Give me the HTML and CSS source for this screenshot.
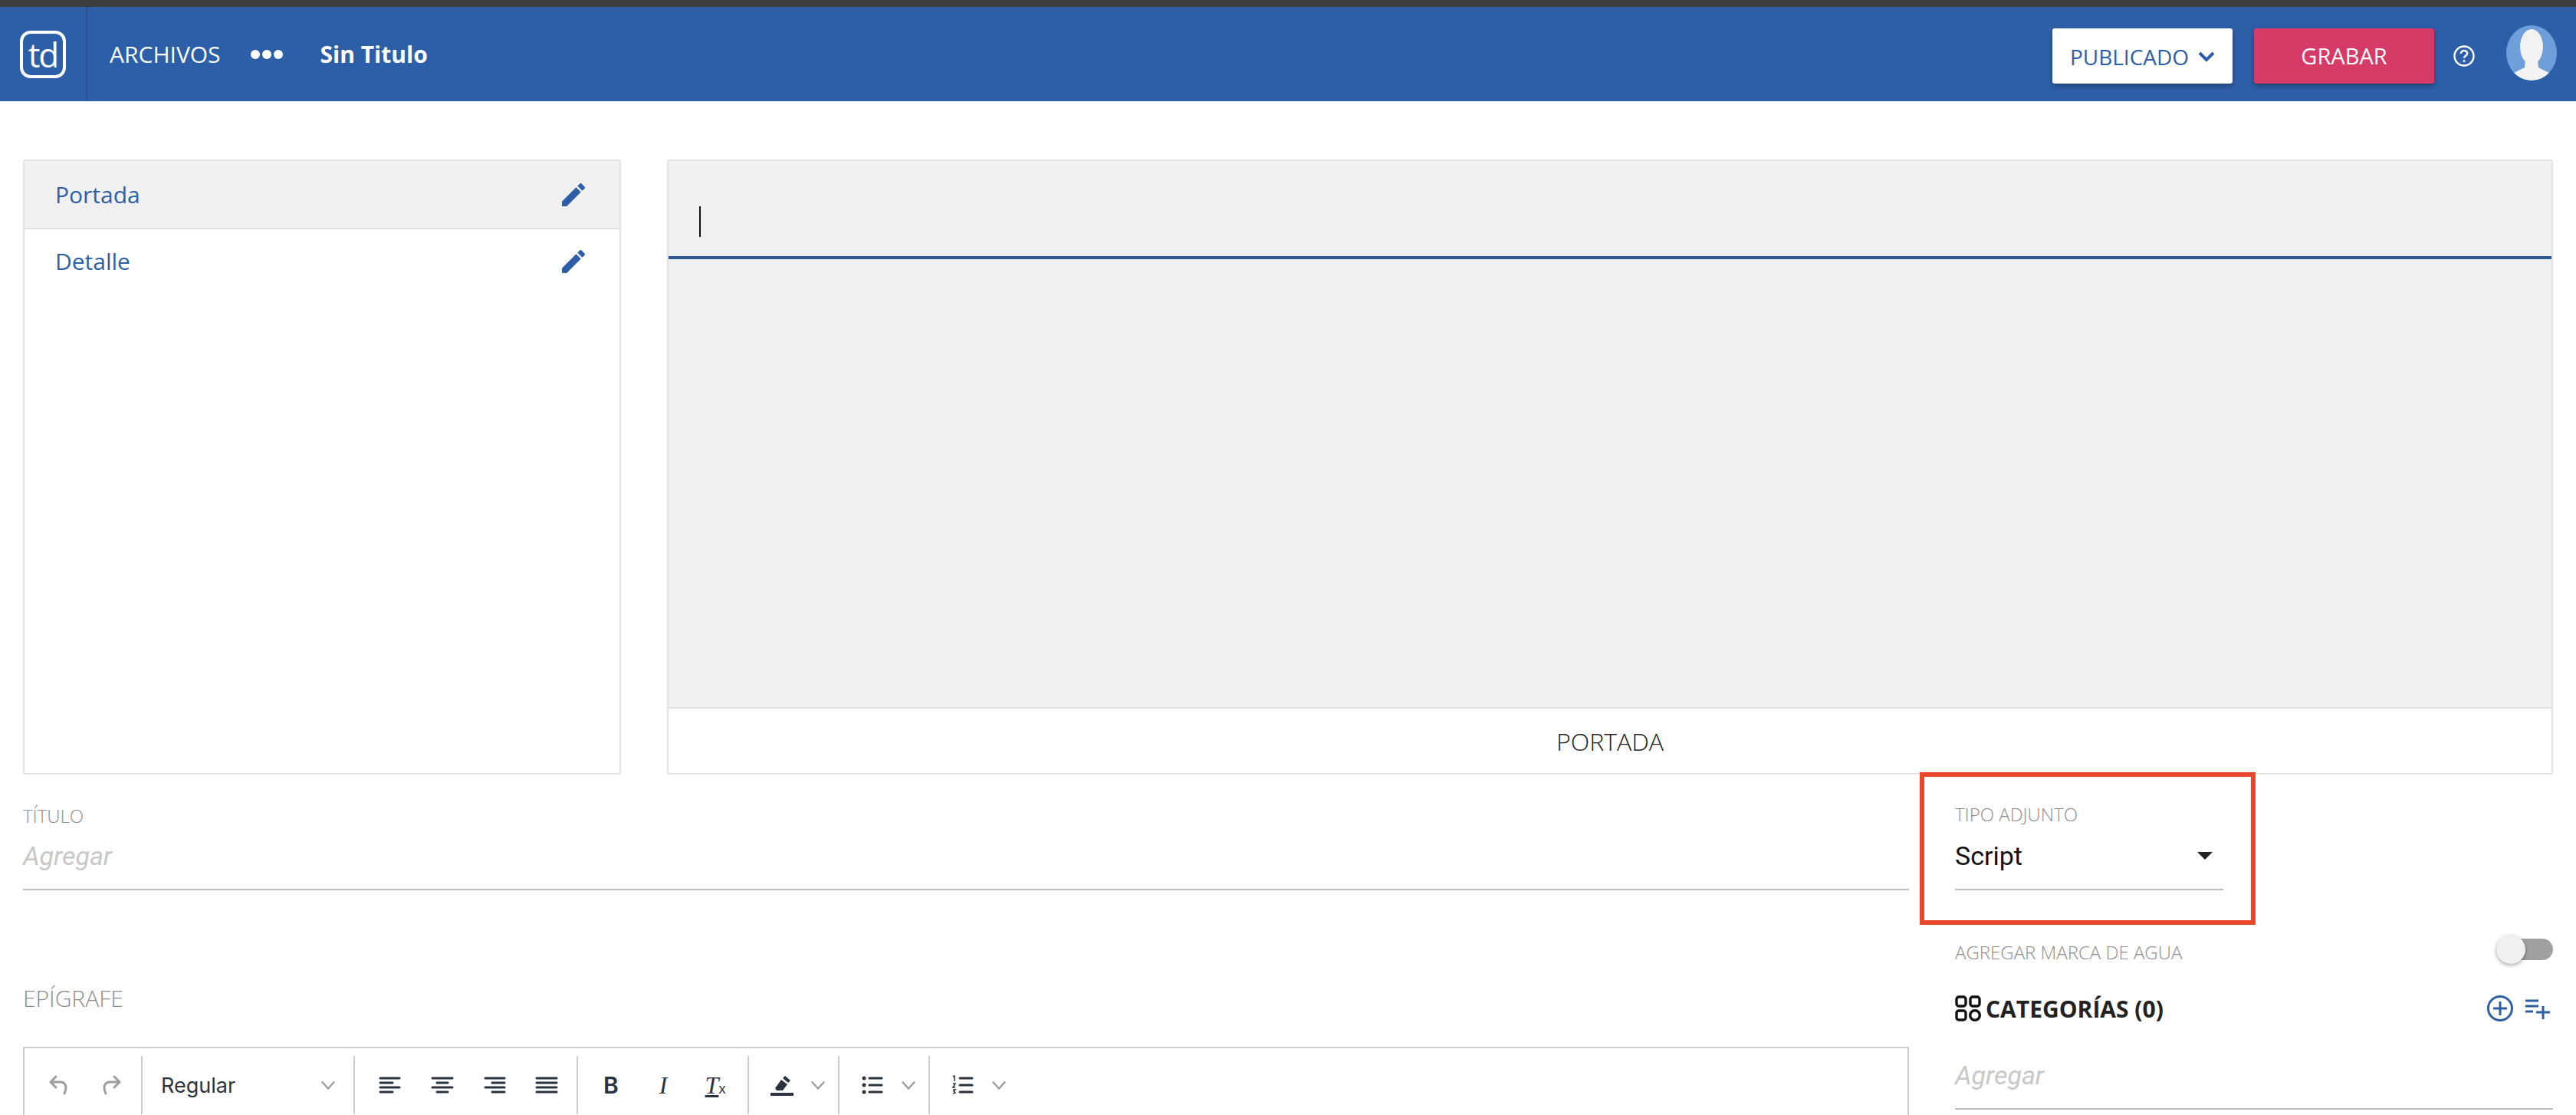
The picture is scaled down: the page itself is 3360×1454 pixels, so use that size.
FILE: index.html
```html
<!DOCTYPE html>
<html lang="es">
<head>
    <meta charset="UTF-8">
    <title>Sin Titulo</title>
    <link rel="stylesheet" href="styles.css">
</head>
<body>
    <div class="topline"></div>
    <div class="header">
        <div class="logo-cell">
            <div class="logo">td</div>
        </div>
        <div class="nav-link">ARCHIVOS</div>
        <div class="dots"><span></span><span></span><span></span></div>
        <div class="doc-title">Sin Titulo</div>
        <div class="header-right">
            <div class="status-btn">PUBLICADO
                <svg width="22" height="14" viewBox="0 0 22 14"><path d="M2 2l9 9 9-9" fill="none" stroke="#2d5fa8" stroke-width="4"/></svg>
            </div>
            <div class="save-btn">GRABAR</div>
            <svg class="help" width="30" height="30" viewBox="0 0 30 30">
                <circle cx="15" cy="15" r="12.5" fill="none" stroke="#fff" stroke-width="2.4"/>
                <path d="M10.8 12c0-2.600 1.900-4 4.200-4s4.200 1.400 4.200 3.700c0 3.100-4.200 3.100-4.200 6.100" fill="none" stroke="#fff" stroke-width="2.400"/>
                <circle cx="15" cy="21.500" r="1.500" fill="#fff"/>
            </svg>
            <svg class="avatar" width="66" height="72" viewBox="0 0 66 72">
                <defs><clipPath id="avatar-clip"><ellipse cx="33" cy="36" rx="33" ry="36"/></clipPath></defs>
                <ellipse cx="33" cy="36" rx="33" ry="36" fill="#6f9fdb"/>
                <g clip-path="url(#avatar-clip)" fill="#f2f2f2">
                    <ellipse cx="33" cy="28" rx="15" ry="23"/>
                    <path d="M25 44h16l1 11 16 8v12H8V63l16-8z"/>
                </g>
            </svg>
        </div>
    </div>

    <div class="main">
        <div class="top-row">
            <div class="slides">
                <div class="slide-row active">
                    <span>Portada</span>
                    <svg width="40" height="40" viewBox="0 0 24 24"><path d="M3 17.25V21h3.750L17.810 9.940l-3.750-3.750L3 17.250zM20.710 7.040c.39-.39.39-1.020 0-1.410l-2.340-2.340c-.39-.39-1.020-.39-1.410 0l-1.830 1.830 3.750 3.750 1.830-1.830z" fill="#2d5fa8"/></svg>
                </div>
                <div class="slide-row">
                    <span>Detalle</span>
                    <svg width="40" height="40" viewBox="0 0 24 24"><path d="M3 17.25V21h3.750L17.810 9.940l-3.750-3.750L3 17.250zM20.710 7.040c.39-.39.39-1.020 0-1.410l-2.340-2.340c-.39-.39-1.020-.39-1.410 0l-1.830 1.830 3.750 3.750 1.830-1.830z" fill="#2d5fa8"/></svg>
                </div>
            </div>
            <div class="preview">
                <div class="preview-input"><div class="caret"></div></div>
                <div class="preview-body"></div>
                <div class="preview-caption">PORTADA</div>
            </div>
        </div>

        <div class="bottom-row">
            <div class="col-left">
                <div class="field-label">TÍTULO</div>
                <div class="field-input placeholder">Agregar</div>
                <div class="section-label">EPÍGRAFE</div>
                <div class="editor">
                    <div class="toolbar">
                        <div class="tool-group history-group">
                            <svg class="tool" viewBox="0 0 32 32"><path d="M12 5L5 12l7 7M5 12h13c5 0 7 4 7 7s-1 6-2 8" fill="none" stroke="#9a9da1" stroke-width="3" stroke-linecap="round" stroke-linejoin="round"/></svg>
                            <svg class="tool" viewBox="0 0 32 32"><path d="M20 5l7 7-7 7M27 12H14c-5 0-7 4-7 7s1 6 2 8" fill="none" stroke="#9a9da1" stroke-width="3" stroke-linecap="round" stroke-linejoin="round"/></svg>
                        </div>
                        <div class="tool-group font-select">
                            <span>Regular</span>
                            <svg class="chev" viewBox="0 0 22 14"><path d="M2 2l9 10 9-10" fill="none" stroke="#9a9da1" stroke-width="2.600"/></svg>
                        </div>
                        <div class="tool-group align-group">
                            <svg class="tool" viewBox="0 0 32 32"><path d="M3 7h25M3 13h16M3 19h25M3 25h16" stroke="#2a3340" stroke-width="3" stroke-linecap="round"/></svg>
                            <svg class="tool" viewBox="0 0 32 32"><path d="M3 7h26M9 13h14M3 19h26M9 25h14" stroke="#2a3340" stroke-width="3" stroke-linecap="round"/></svg>
                            <svg class="tool" viewBox="0 0 32 32"><path d="M4 7h25M13 13h16M4 19h25M13 25h16" stroke="#2a3340" stroke-width="3" stroke-linecap="round"/></svg>
                            <svg class="tool" viewBox="0 0 32 32"><path d="M3 7h26M3 13h26M3 19h26M3 25h26" stroke="#2a3340" stroke-width="3" stroke-linecap="round"/></svg>
                        </div>
                        <div class="tool-group format-group">
                            <span class="tool-text bold">B</span>
                            <span class="tool-text italic">I</span>
                            <span class="tool-text clear"><u>T</u><small>x</small></span>
                        </div>
                        <div class="tool-group has-chev">
                            <svg class="tool" viewBox="0 0 32 32"><path d="M20 4l7 6-3 3-7-6zM15 9l8 6-6 8H9l-2-3z" fill="#2a3340"/><rect x="1" y="26" width="30" height="4" fill="#2a3340"/></svg>
                            <svg class="chev" viewBox="0 0 22 14"><path d="M2 2l9 10 9-10" fill="none" stroke="#9a9da1" stroke-width="2.600"/></svg>
                        </div>
                        <div class="tool-group has-chev">
                            <svg class="tool" viewBox="0 0 32 32"><circle cx="5" cy="7" r="2.500" fill="#2a3340"/><circle cx="5" cy="16" r="2.500" fill="#2a3340"/><circle cx="5" cy="25" r="2.500" fill="#2a3340"/><path d="M12 7h16M12 16h16M12 25h16" stroke="#2a3340" stroke-width="3" stroke-linecap="round"/></svg>
                            <svg class="chev" viewBox="0 0 22 14"><path d="M2 2l9 10 9-10" fill="none" stroke="#9a9da1" stroke-width="2.600"/></svg>
                        </div>
                        <div class="tool-group has-chev">
                            <svg class="tool" viewBox="0 0 32 32"><path d="M3 5l2-1v7M3 14h3l-3 5h3M3 22h3l-2 2 2 2-3 1" fill="none" stroke="#2a3340" stroke-width="1.500"/><path d="M12 7h16M12 16h16M12 25h16" stroke="#2a3340" stroke-width="3" stroke-linecap="round"/></svg>
                            <svg class="chev" viewBox="0 0 22 14"><path d="M2 2l9 10 9-10" fill="none" stroke="#9a9da1" stroke-width="2.600"/></svg>
                        </div>
                    </div>
                </div>
            </div>

            <div class="col-right">
                <div class="type-box">
                    <div class="field-label">TIPO ADJUNTO</div>
                    <div class="field-input select">
                        <span>Script</span>
                        <div class="select-arrow"></div>
                    </div>
                </div>
                <div class="side-content">
                    <div class="watermark">
                        <span class="field-label">AGREGAR MARCA DE AGUA</span>
                        <div class="switch"><div class="knob"></div></div>
                    </div>
                    <div class="cat-head">
                        <svg width="34" height="34" viewBox="0 0 34 34" fill="none" stroke="#111" stroke-width="3.400">
                            <rect x="2" y="2" width="12" height="12" rx="3"/>
                            <rect x="20" y="2" width="12" height="12" rx="3"/>
                            <rect x="2" y="20" width="12" height="12" rx="3"/>
                            <circle cx="26" cy="26" r="6.300"/>
                        </svg>
                        <span class="cat-title">CATEGORÍAS (0)</span>
                        <div class="cat-actions">
                            <svg width="36" height="36" viewBox="0 0 36 36" fill="none" stroke="#2d5fa8" stroke-width="3">
                                <circle cx="18" cy="18" r="15.500"/>
                                <path d="M18 9v18M9 18h18"/>
                            </svg>
                            <svg width="36" height="36" viewBox="0 0 36 36" fill="none" stroke="#2d5fa8" stroke-width="3">
                                <path d="M2 8h17M2 15h17M2 22h10M25 15v17M16 23h18"/>
                            </svg>
                        </div>
                    </div>
                    <div class="field-input placeholder">Agregar</div>
                </div>
            </div>
        </div>
    </div>
</body>
</html>
```

FILE: styles.css
```css
html, body {
    margin: 0;
    padding: 0;
    height: 1454px;
    overflow: hidden;
    background-color: white;
    font-family: "Open Sans", sans-serif;
}
.topline {
    height: 9px;
    background-color: #3d3d3d;
}
.header {
    height: 123px;
    background-color: #2d5fa8;
    color: white;
    display: flex;
    align-items: center;
}
.logo-cell {
    width: 112px;
    height: 100%;
    border-right: 2px solid #27538f;
    display: flex;
    align-items: center;
    justify-content: center;
}
.logo {
    width: 52px;
    height: 54px;
    border: 4px solid white;
    border-radius: 14px;
    display: flex;
    align-items: center;
    justify-content: center;
    font-size: 44px;
    font-weight: 400;
    letter-spacing: -2px;
}
.nav-link {
    margin-left: 29px;
    font-size: 30px;
}
.dots {
    margin-left: 39px;
    display: flex;
    gap: 3px;
}
.dots span {
    width: 12px;
    height: 12px;
    border-radius: 50%;
    background-color: white;
}
.doc-title {
    margin-left: 49px;
    font-size: 30px;
    font-weight: 700;
}
.header-right {
    margin-left: auto;
    display: flex;
    align-items: center;
    padding: 4px 25px 0 0;
}
.status-btn {
    width: 235px;
    height: 72px;
    padding-top: 2px;
    box-sizing: border-box;
    background-color: white;
    color: #2d5fa8;
    border-radius: 3px;
    box-shadow: 0 3px 6px rgba(0, 0, 0, 0.35);
    font-size: 28px;
    display: flex;
    align-items: center;
    justify-content: center;
    gap: 12px;
}
.save-btn {
    width: 235px;
    height: 72px;
    margin-left: 28px;
    background-color: #d63a66;
    border-radius: 3px;
    box-shadow: 0 3px 6px rgba(0, 0, 0, 0.35);
    font-size: 29px;
    display: flex;
    align-items: center;
    justify-content: center;
}
.help {
    margin-left: 24px;
}
.avatar {
    margin-left: 40px;
    margin-top: -8px;
}
.main {
    padding: 76px 30px 0;
    height: 1246px;
    overflow: hidden;
}
.top-row {
    display: grid;
    grid-template-columns: 780px 1fr;
    gap: 60px;
    height: 802px;
}
.slides {
    border: 2px solid #e2e2e2;
    border-radius: 3px;
}
.slide-row {
    height: 87px;
    border-bottom: 2px solid #e2e2e2;
    display: flex;
    align-items: center;
    justify-content: space-between;
    padding: 0 40px 0 40px;
    color: #2d5fa8;
    font-size: 30px;
}
.slide-row:last-child {
    border-bottom: none;
    height: 83px;
}
.slide-row.active {
    background-color: #f0f0f0;
}
.preview {
    border: 2px solid #e2e2e2;
    border-radius: 3px;
    display: flex;
    flex-direction: column;
}
.preview-input {
    height: 124px;
    box-sizing: content-box;
    background-color: #f0f0f0;
    border-bottom: 4px solid #2c5790;
    display: flex;
    align-items: center;
    padding-left: 40px;
}
.caret {
    width: 2px;
    height: 40px;
    margin-top: 34px;
    background-color: #111;
}
.preview-body {
    flex: 1;
    background-color: #f0f0f0;
    border-bottom: 2px solid #e2e2e2;
}
.preview-caption {
    height: 84px;
    display: flex;
    align-items: center;
    justify-content: center;
    font-size: 32px;
    font-weight: 300;
    color: #222;
}
.bottom-row {
    display: flex;
    gap: 14px;
}
.col-left {
    width: 2460px;
    padding-top: 39px;
}
.col-right {
    width: 826px;
}
.field-label {
    font-size: 24px;
    font-weight: 300;
    color: #8c8c8c;
    line-height: 30px;
}
.field-input {
    height: 82px;
    border-bottom: 2px solid #bdbdbd;
    font-family: Roboto, sans-serif;
    font-size: 34px;
    display: flex;
    align-items: center;
    padding-bottom: 6px;
    box-sizing: border-box;
}
.placeholder {
    color: #c8c8c8;
    font-style: italic;
}
.section-label {
    margin-top: 121px;
    font-size: 30px;
    font-weight: 300;
    color: #8c8c8c;
    line-height: 40px;
}
.editor {
    margin-top: 43px;
    border: 2px solid #cccccc;
    height: 200px;
}
.toolbar {
    display: flex;
    align-items: center;
    height: 86px;
    padding-top: 10px;
    box-sizing: border-box;
}
.tool-group {
    display: flex;
    align-items: center;
    gap: 36px;
    height: 76px;
    padding: 0 23px 0 27px;
    border-right: 2px solid #cccccc;
}
.tool-group:last-child {
    border-right: none;
}
.tool {
    width: 32px;
    height: 32px;
}
.chev {
    width: 20px;
    height: 14px;
}
.has-chev {
    padding-right: 16px;
}
.has-chev .chev {
    margin-left: -15px;
}
.history-group {
    padding-left: 29px;
}
.align-group {
    padding-left: 30px;
}
.format-group {
    padding-right: 26px;
}
.font-select {
    width: 228px;
    padding: 0 23px 0 24px;
    justify-content: space-between;
    font-family: Inter, sans-serif;
    font-size: 27px;
    color: #2a3340;
}
.tool-text {
    width: 32px;
    text-align: center;
    color: #2a3340;
    font-size: 32px;
    font-family: "Liberation Sans", sans-serif;
}
.tool-text.bold {
    font-family: Inter, sans-serif;
    font-weight: 600;
    font-size: 30px;
}
.tool-text.italic {
    font-family: "Liberation Serif", serif;
    font-style: italic;
}
.tool-text.clear {
    font-family: "Liberation Serif", serif;
    font-style: italic;
}
.tool-text.clear small {
    font-size: 18px;
    font-style: normal;
    font-family: "Liberation Sans", sans-serif;
}
.type-box {
    width: 438px;
    height: 199px;
    box-sizing: border-box;
    border: 6px solid #e8472b;
    margin-top: -3px;
    padding: 34px 36px 0 40px;
}
.select {
    margin-top: 2px;
    justify-content: space-between;
    color: #111;
    padding-right: 14px;
}
.select-arrow {
    width: 0;
    height: 0;
    border-left: 10px solid transparent;
    border-right: 10px solid transparent;
    border-top: 10px solid #222;
}
.side-content {
    padding-left: 46px;
}
.watermark {
    display: flex;
    align-items: center;
    justify-content: space-between;
    margin-top: 11px;
    height: 50px;
}
.switch {
    width: 74px;
    height: 28px;
    margin-bottom: 8px;
    background-color: #a0a0a0;
    border-radius: 14px;
    position: relative;
}
.knob {
    position: absolute;
    left: 0;
    top: -5px;
    width: 38px;
    height: 38px;
    border-radius: 50%;
    background-color: #f0f0f0;
    box-shadow: 0 2px 5px rgba(0, 0, 0, 0.35);
}
.cat-head {
    display: flex;
    align-items: center;
    margin-top: 25px;
    height: 46px;
    gap: 6px;
}
.cat-title {
    font-size: 30px;
    font-weight: 700;
    color: #222;
}
.cat-actions {
    margin-left: auto;
    padding-right: 2px;
    display: flex;
    gap: 13px;
}
.side-content .field-input {
    margin-top: 27px;
}
```
